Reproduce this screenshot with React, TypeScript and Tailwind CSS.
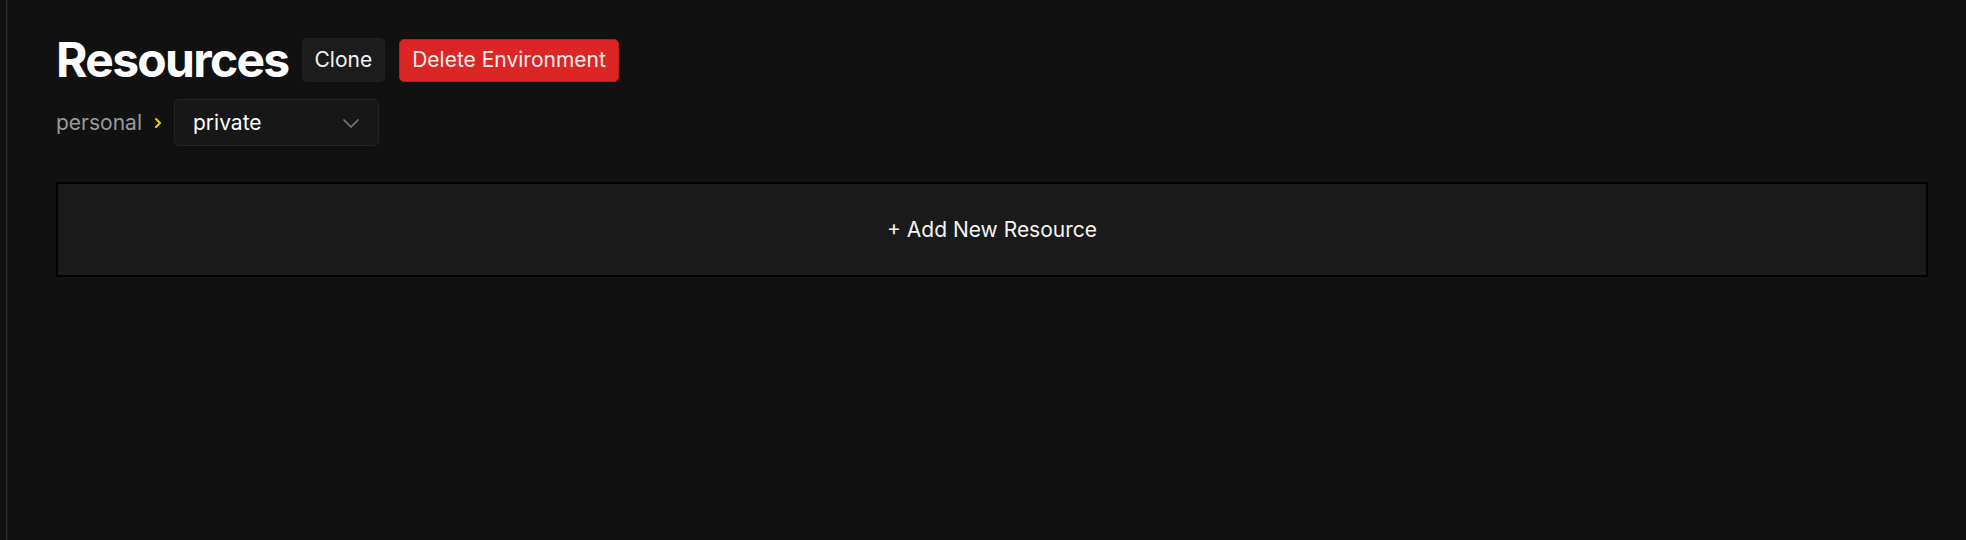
import React from "react";

export default function App() {
  return (
    <div
      className="flex h-[540px] w-full bg-[#111111] text-white"
      style={{ fontFamily: "Inter, 'Noto Sans', sans-serif" }}
    >
      <div className="w-[7px] shrink-0 border-r border-[#2c2c2c]" />
      <div className="flex-1 border-l border-[#1c1c1c] pl-[48px] pr-[38px] pt-[36px]">
        <div className="flex items-center">
          <h1 className="text-[48px] font-bold leading-[48px] tracking-[-1.7px] text-white">
            Resources
          </h1>
          <button className="ml-[13px] h-[44px] rounded-[5px] border border-[#222222] bg-[#1c1c1c] px-[12px] text-[21px] text-[#f2f2f2]">
            Clone
          </button>
          <button className="ml-[14px] h-[43px] rounded-[5px] border border-[#b91c1c] bg-[#dc2626] px-[12px] text-[21px] text-[#fdeaea]">
            Delete Environment
          </button>
        </div>
        <div className="mt-[15px] flex items-center">
          <span className="text-[21px] text-[#9a9a9a]">personal</span>
          <svg
            className="ml-[11px]"
            width="10"
            height="14"
            viewBox="0 0 10 14"
            fill="none"
          >
            <path
              d="M3 3 L7 7 L3 11"
              stroke="#facc15"
              strokeWidth="2"
              strokeLinecap="round"
              strokeLinejoin="round"
            />
          </svg>
          <div className="ml-[11px] flex h-[47px] w-[205px] items-center justify-between rounded-[5px] border border-[#242424] bg-[#171717] pl-[18px] pr-[17px]">
            <span className="text-[21px] text-white">private</span>
            <svg width="20" height="20" viewBox="0 0 20 20" fill="none">
              <path
                d="M3 7 L10 14 L17 7"
                stroke="#7a7a7a"
                strokeWidth="1.7"
                strokeLinecap="round"
                strokeLinejoin="round"
              />
            </svg>
          </div>
        </div>
        <div className="mt-[36px] flex h-[95px] items-center justify-center border-2 border-black bg-[#1a1a1a]">
          <span className="text-[21px] text-[#f4f4f4]">+ Add New Resource</span>
        </div>
      </div>
    </div>
  );
}
